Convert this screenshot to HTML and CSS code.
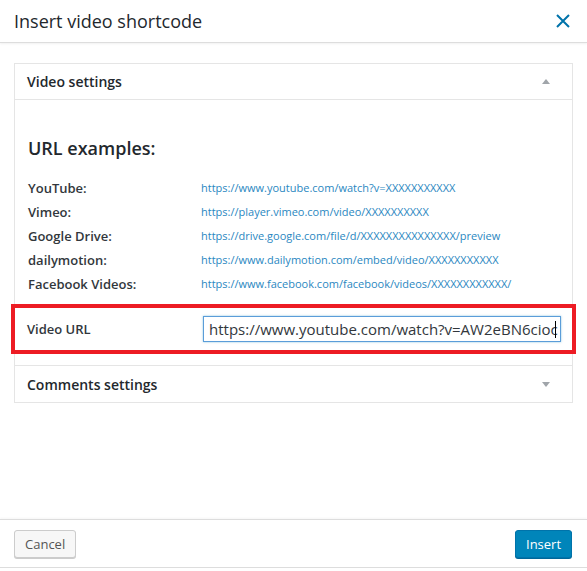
FILE: index.html
```html
<!DOCTYPE html>
<html>
<head>
<meta charset="utf-8">
<link rel="stylesheet" href="styles.css">
</head>
<body>
<div class="modal">
  <header class="modal-header">
    <h1 class="modal-title">Insert video shortcode</h1>
    <button class="close" aria-label="Close">
      <svg width="14" height="14" viewBox="0 0 14 14"><path d="M1 1L13 13M13 1L1 13" stroke="#0073aa" stroke-width="2" fill="none"/></svg>
    </button>
  </header>
  <main class="modal-body">
    <section class="panel">
      <div class="panel-head">
        <span>Video settings</span>
        <span class="tri tri-up"></span>
      </div>
      <div class="panel-body">
        <h2 class="examples-title">URL examples:</h2>
        <div class="examples">
          <div class="ex-label">YouTube:</div><div class="ex-url">https://www.youtube.com/watch?v=XXXXXXXXXXX</div>
          <div class="ex-label">Vimeo:</div><div class="ex-url">https://player.vimeo.com/video/XXXXXXXXXX</div>
          <div class="ex-label">Google Drive:</div><div class="ex-url">https://drive.google.com/file/d/XXXXXXXXXXXXXXX/preview</div>
          <div class="ex-label">dailymotion:</div><div class="ex-url">https://www.dailymotion.com/embed/video/XXXXXXXXXXX</div>
          <div class="ex-label">Facebook Videos:</div><div class="ex-url">https://www.facebook.com/facebook/videos/XXXXXXXXXXXX/</div>
        </div>
      </div>
      <div class="url-row">
        <label class="url-label">Video URL</label>
        <div class="url-input">https://www.youtube.com/watch?v=AW2eBN6cioc<span class="caret"></span></div>
      </div>
      <div class="panel-head panel-head-bottom">
        <span>Comments settings</span>
        <span class="tri tri-down"></span>
      </div>
    </section>
  </main>
  <footer class="modal-footer">
    <button class="btn btn-cancel">Cancel</button>
    <button class="btn btn-primary">Insert</button>
  </footer>
</div>
</body>
</html>
```
FILE: styles.css
```css
html, body {
  margin: 0;
  padding: 0;
  background: #fff;
}
body {
  font-family: "Open Sans", "Noto Sans", sans-serif;
  color: #23282d;
}
.modal {
  height: 571px;
  display: flex;
  flex-direction: column;
}
.modal-header {
  height: 43px;
  box-sizing: border-box;
  display: flex;
  align-items: center;
  justify-content: space-between;
  padding: 0 17px 0 14px;
  border-bottom: 1px solid #ddd;
  box-shadow: 0 1px 2px rgba(0,0,0,0.06);
}
.modal-title {
  margin: 0;
  font-size: 18px;
  font-weight: 400;
  color: #23282d;
}
.close {
  border: 0;
  background: none;
  padding: 0;
  width: 14px;
  height: 14px;
  display: flex;
}
.modal-body {
  flex: 1;
  padding: 20px 14px 0 14px;
}
.panel {
  border: 1px solid #e5e5e5;
}
.panel-head {
  height: 36px;
  box-sizing: border-box;
  display: flex;
  align-items: center;
  justify-content: space-between;
  padding: 0 22px 0 12px;
  font-size: 14px;
  font-weight: 600;
  color: #23282d;
  border-bottom: 1px solid #e5e5e5;
}
.panel-head-bottom {
  border-bottom: 0;
  border-top: 1px solid #e5e5e5;
  height: 37px;
}
.tri {
  width: 0;
  height: 0;
  border-left: 4px solid transparent;
  border-right: 4px solid transparent;
}
.tri-up {
  border-bottom: 5px solid #a0a5aa;
}
.tri-down {
  border-top: 5px solid #a0a5aa;
}
.panel-body {
  padding: 36px 13px 0 13px;
}
.examples-title {
  margin: 0 0 16px 0;
  font-size: 18px;
  font-weight: 600;
  color: #23282d;
  line-height: 24px;
}
.examples {
  display: grid;
  grid-template-columns: 173px 1fr;
  row-gap: 0;
}
.ex-label {
  font-size: 13px;
  font-weight: 600;
  color: #32373c;
  line-height: 24px;
}
.ex-url {
  font-size: 11px;
  color: #2a87c1;
  line-height: 24px;
}
.url-row {
  margin: 8px -4px 11px -4px;
  border: 4px solid #ed1c24;
  height: 50px;
  box-sizing: border-box;
  display: flex;
  align-items: center;
  padding: 0 11px 0 12px;
}
.url-label {
  width: 176px;
  font-size: 13px;
  font-weight: 600;
  color: #32373c;
}
.url-input {
  flex: 1;
  height: 26px;
  box-sizing: border-box;
  border: 1px solid #5b9dd9;
  box-shadow: 0 0 2px rgba(30,140,190,0.5);
  font-size: 15px;
  line-height: 24px;
  padding: 0 5px;
  color: #32373c;
  white-space: nowrap;
  overflow: hidden;
  display: flex;
  align-items: center;
}
.caret {
  display: inline-block;
  flex: none;
  width: 1px;
  height: 17px;
  margin-left: -3px;
  background: #000;
}
.modal-footer {
  height: 49px;
  margin-bottom: 3px;
  box-sizing: border-box;
  display: flex;
  align-items: center;
  justify-content: space-between;
  padding: 0 15px 0 14px;
  border-top: 1px solid #ddd;
  border-bottom: 1px solid #ddd;
  box-shadow: 0 -1px 2px rgba(0,0,0,0.04);
}
.btn {
  height: 28px;
  box-sizing: border-box;
  border-radius: 3px;
  font-family: inherit;
  font-size: 13px;
  padding: 0 10px;
  line-height: 26px;
}
.btn-cancel {
  background: #f7f7f7;
  border: 1px solid #ccc;
  color: #555;
  box-shadow: 0 1px 0 #ccc;
  width: 62px;
}
.btn-primary {
  background: #0085ba;
  border: 1px solid #0073aa;
  color: #fff;
  box-shadow: 0 1px 0 #006799;
  width: 57px;
}
```
